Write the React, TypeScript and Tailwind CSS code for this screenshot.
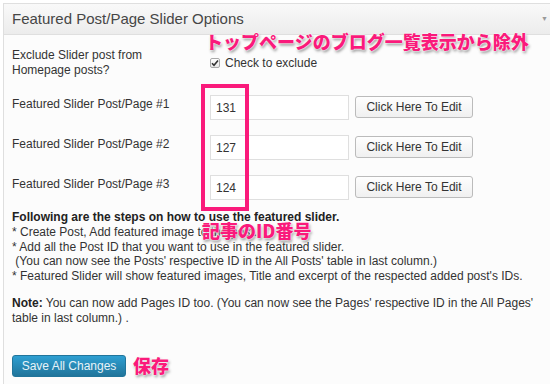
const rows = [
  { label: 'Featured Slider Post/Page #1', value: '131' },
  { label: 'Featured Slider Post/Page #2', value: '127' },
  { label: 'Featured Slider Post/Page #3', value: '124' },
];

const pinkText =
  "absolute font-black text-[18px] leading-[20px] text-[#fa1a7b] [font-family:'Noto_Sans_CJK_JP',sans-serif] [text-shadow:0_0_2px_#fff,0_0_2px_#fff,1px_2px_3px_rgba(0,0,0,0.45)]";

export default function App() {
  return (
    <div className="relative w-[550px] h-[384px] overflow-hidden bg-white text-[12px] text-[#333] [font-family:'Liberation_Sans',Arial,sans-serif]">
      <div className="mt-[3px] ml-[3px] w-[570px] h-[400px] border border-[#dfdfdf] bg-[#fcfcfc]">
        <div className="flex h-[31px] items-center justify-between border-b border-[#dfdfdf] bg-gradient-to-b from-[#f9f9f9] to-[#ececec] pl-[8px] pr-[24px]">
          <span className="text-[15px] text-[#464646]">Featured Post/Page Slider Options</span>
          <span className="text-[7px] text-[#999]">▼</span>
        </div>

        <div className="pl-[8px] pt-[13px]">
          <div className="flex items-center">
            <div className="w-[198px] leading-[15px]">
              Exclude Slider post from
              <br />
              Homepage posts?
            </div>
            <label className="flex items-center gap-[5px]">
              <span className="flex h-[10px] w-[10px] items-center justify-center rounded-[2px] border border-[#a9a9a9] bg-gradient-to-b from-[#fff] to-[#e8e8e8]">
                <svg width="8" height="8" viewBox="0 0 8 8">
                  <path d="M1 4.2 L3 6.3 L7 1.5" fill="none" stroke="#333" strokeWidth="1.6" />
                </svg>
              </span>
              <span>Check to exclude</span>
            </label>
          </div>

          <div className="mt-[17px] flex flex-col gap-[15px]">
            {rows.map((row) => (
              <div key={row.value} className="flex items-start">
                <div className="w-[198px] pt-[2px] leading-[15px]">{row.label}</div>
                <div className="flex h-[25px] w-[139px] items-center border border-[#dfdfdf] bg-white px-[5px] text-[12px] text-[#333]">
                  {row.value}
                </div>
                <button className="ml-[6px] mt-[1px] h-[22px] w-[118px] rounded-[3px] border border-[#bbb] bg-gradient-to-b from-[#fefefe] to-[#f0f0f0] text-[12px] text-[#333]">
                  Click Here To Edit
                </button>
              </div>
            ))}
          </div>

          <div className="mt-[10px] leading-[14.75px]">
            <div className="font-bold text-[#222]">Following are the steps on how to use the featured slider.</div>
            <div>* Create Post, Add featured image to the post.</div>
            <div>* Add all the Post ID that you want to use in the featured slider.</div>
            <div>&nbsp;(You can now see the Posts' respective ID in the All Posts' table in last column.)</div>
            <div>* Featured Slider will show featured images, Title and excerpt of the respected added post's IDs.</div>
            <div className="mt-[12px]">
              <span className="font-bold text-[#222]">Note:</span> You can now add Pages ID too. (You can now see the Pages' respective ID in the All Pages'
              <br />
              table in last column.) .
            </div>
          </div>

          <button className="mt-[30px] h-[22px] w-[114px] rounded-[3px] border border-[#21759b] bg-gradient-to-b from-[#2e9fd2] to-[#21759b] text-[12px] text-[#e6f3f9]">
            Save All Changes
          </button>
        </div>
      </div>

      <div className="absolute left-[201px] top-[84px] h-[127px] w-[48px] border-4 border-[#fa1a7b]" />
      <div className={pinkText + ' left-[205px] top-[31px]'}>トップページのブログ一覧表示から除外</div>
      <div className={pinkText + ' left-[202px] top-[220px]'}>記事のID番号</div>
      <div className={pinkText + ' left-[133px] top-[355px]'}>保存</div>
    </div>
  );
}
